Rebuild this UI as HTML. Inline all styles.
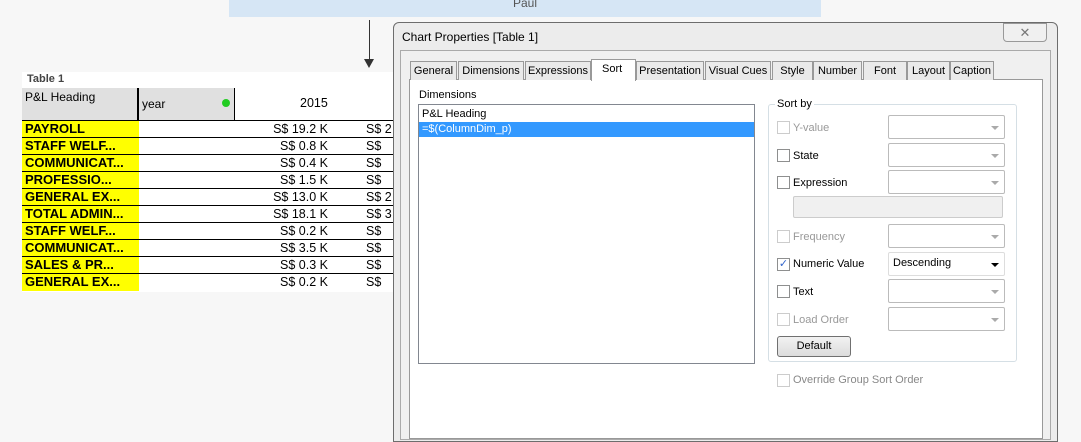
<!DOCTYPE html>
<html><head><style>
*{margin:0;padding:0;box-sizing:border-box}
body{width:1081px;height:434px;background:#f7f7f7;position:relative;overflow:hidden;font-family:"Liberation Sans",sans-serif;font-size:11px;color:#000}
.a{position:absolute}
.row{position:absolute;left:22px;width:371px;height:17px;border-top:1px solid #000;background:#fff}
.row .n{position:absolute;left:0;top:0;width:117px;height:16px;background:#ff0;font-weight:bold;font-size:13px;padding-left:3px;line-height:16px}
.row .v{position:absolute;right:65px;top:0;font-size:12.5px;line-height:16px}
.row .w{position:absolute;left:344px;top:0;font-size:12.5px;line-height:16px;white-space:nowrap}
.tab{position:absolute;top:61px;height:19px;border:1px solid #999;border-bottom:none;background:#eaeaea;font-size:11px;line-height:18px;text-align:center}
.cb{position:absolute;width:13px;height:13px;border:1px solid #8e8f8f;background:#fff}
.cb.d{border-color:#ccc}
.lbl{position:absolute;font-size:11px}
.dd{position:absolute;left:888px;width:117px;height:24px;border:1px solid #bbb;background:#fff;border-radius:2px}
.dd:after{content:"";position:absolute;right:5px;top:10px;border:4px solid transparent;border-top:4px solid #aaa}
.dd.k:after{border-top:4px solid #000}
</style></head><body>
<div class="a" style="left:229px;top:0;width:592px;height:17px;background:#d6e6f5;text-align:center;font-size:12px;color:#555;line-height:6px">Paul</div>
<div class="a" style="left:369px;top:20px;width:1px;height:40px;background:#333"></div>
<div class="a" style="left:364px;top:59px;border:5px solid transparent;border-top:9px solid #333;border-bottom:none"></div>
<div class="a" style="left:22px;top:72px;width:371px;height:220px;background:#fff"></div>
<div class="a" style="left:27px;top:73px;font-weight:bold;font-size:11px;color:#444">Table 1</div>
<div class="a" style="left:22px;top:88px;width:116px;height:32px;background:#e0e0e0;font-size:12px;padding:2px 3px">P&amp;L Heading</div>
<div class="a" style="left:137px;top:88px;width:98px;height:32px;background:#e0e0e0;border-left:2px solid #000;border-right:1px solid #000;font-size:12px;padding:9px 3px">year</div>
<div class="a" style="left:222px;top:99px;width:8px;height:8px;border-radius:50%;background:#2c2"></div>
<div class="a" style="left:300px;top:96px;font-size:12.5px">2015</div>
<div class="row" style="top:120px"><div class="n">PAYROLL</div><div class="v">S$ 19.2 K</div><div class="w">S$ 2</div></div>
<div class="row" style="top:137px"><div class="n">STAFF WELF...</div><div class="v">S$ 0.8 K</div><div class="w">S$</div></div>
<div class="row" style="top:154px"><div class="n">COMMUNICAT...</div><div class="v">S$ 0.4 K</div><div class="w">S$</div></div>
<div class="row" style="top:171px"><div class="n">PROFESSIO...</div><div class="v">S$ 1.5 K</div><div class="w">S$</div></div>
<div class="row" style="top:188px"><div class="n">GENERAL EX...</div><div class="v">S$ 13.0 K</div><div class="w">S$ 2</div></div>
<div class="row" style="top:205px"><div class="n">TOTAL ADMIN...</div><div class="v">S$ 18.1 K</div><div class="w">S$ 3</div></div>
<div class="row" style="top:222px"><div class="n">STAFF WELF...</div><div class="v">S$ 0.2 K</div><div class="w">S$</div></div>
<div class="row" style="top:239px"><div class="n">COMMUNICAT...</div><div class="v">S$ 3.5 K</div><div class="w">S$</div></div>
<div class="row" style="top:256px"><div class="n">SALES &amp; PR...</div><div class="v">S$ 0.3 K</div><div class="w">S$</div></div>
<div class="row" style="top:273px;height:18px"><div class="n" style="height:17px">GENERAL EX...</div><div class="v">S$ 0.2 K</div><div class="w">S$</div></div>

<div class="a" style="left:393px;top:22px;width:665px;height:420px;background:#ececec;border:1px solid #6d6d6d;border-radius:6px 6px 0 0"></div>
<div class="a" style="left:402px;top:30px;font-size:12px">Chart Properties [Table 1]</div>
<div class="a" style="left:1003px;top:23px;width:44px;height:19px;border:1px solid #999;border-radius:0 0 4px 4px;background:#f0f0f0;text-align:center;color:#777;font-size:13px;line-height:17px">✕</div>
<div class="a" style="left:400px;top:50px;width:651px;height:390px;background:#f0f0f0;border:1px solid #aaa"></div>
<div class="a" style="left:409px;top:79px;width:634px;height:360px;background:#fff;border:1px solid #999"></div>
<div class="tab" style="left:410px;width:47px">General</div>
<div class="tab" style="left:458px;width:66px">Dimensions</div>
<div class="tab" style="left:525px;width:66px">Expressions</div>
<div class="tab" style="left:591px;top:59px;height:22px;width:45px;background:#fff;text-align:left;padding-left:10px">Sort</div>
<div class="tab" style="left:636px;width:68px">Presentation</div>
<div class="tab" style="left:705px;width:66px">Visual Cues</div>
<div class="tab" style="left:772px;width:41px">Style</div>
<div class="tab" style="left:813px;width:49px">Number</div>
<div class="tab" style="left:863px;width:44px">Font</div>
<div class="tab" style="left:907px;width:43px">Layout</div>
<div class="tab" style="left:950px;width:44px">Caption</div>
<div class="lbl" style="left:419px;top:89px">Dimensions</div>
<div class="a" style="left:418px;top:104px;width:337px;height:260px;border:1px solid #828790;background:#fff"></div>
<div class="lbl" style="left:422px;top:108px">P&amp;L Heading</div>
<div class="a" style="left:419px;top:122px;width:335px;height:15px;background:#3399ff;color:#fff;padding-left:3px;line-height:15px">=$(ColumnDim_p)</div>
<div class="a" style="left:768px;top:104px;width:249px;height:258px;border:1px solid #d5dfe5;border-radius:3px"></div>
<div class="lbl" style="left:775px;top:98px;background:#fff;padding:0 2px">Sort by</div>
<div class="cb d" style="left:777px;top:121px"></div><div class="lbl" style="left:793px;top:122px;color:#999">Y-value</div><div class="dd" style="top:115px"></div>
<div class="cb" style="left:777px;top:149px"></div><div class="lbl" style="left:793px;top:150px">State</div><div class="dd" style="top:143px"></div>
<div class="cb" style="left:777px;top:176px"></div><div class="lbl" style="left:793px;top:177px">Expression</div><div class="dd" style="top:170px"></div>
<div class="a" style="left:793px;top:196px;width:210px;height:22px;border:1px solid #ccc;background:#f0f0f0;border-radius:2px"></div>
<div class="cb d" style="left:777px;top:230px"></div><div class="lbl" style="left:793px;top:231px;color:#999">Frequency</div><div class="dd" style="top:224px"></div>
<div class="cb" style="left:777px;top:258px;font-size:11px;line-height:11px;color:#36c;text-align:center">✓</div><div class="lbl" style="left:793px;top:258px">Numeric Value</div><div class="dd k" style="top:252px;border-color:#ddd;padding:4px 4px;font-size:11px">Descending</div>
<div class="cb" style="left:777px;top:285px"></div><div class="lbl" style="left:793px;top:286px">Text</div><div class="dd" style="top:279px"></div>
<div class="cb d" style="left:777px;top:313px"></div><div class="lbl" style="left:793px;top:314px;color:#999">Load Order</div><div class="dd" style="top:307px"></div>
<div class="a" style="left:777px;top:336px;width:74px;height:21px;border:1px solid #707070;border-radius:3px;background:linear-gradient(#f2f2f2,#dcdcdc);text-align:center;line-height:19px">Default</div>
<div class="cb d" style="left:777px;top:374px"></div><div class="lbl" style="left:793px;top:374px;color:#888">Override Group Sort Order</div>
</body></html>
